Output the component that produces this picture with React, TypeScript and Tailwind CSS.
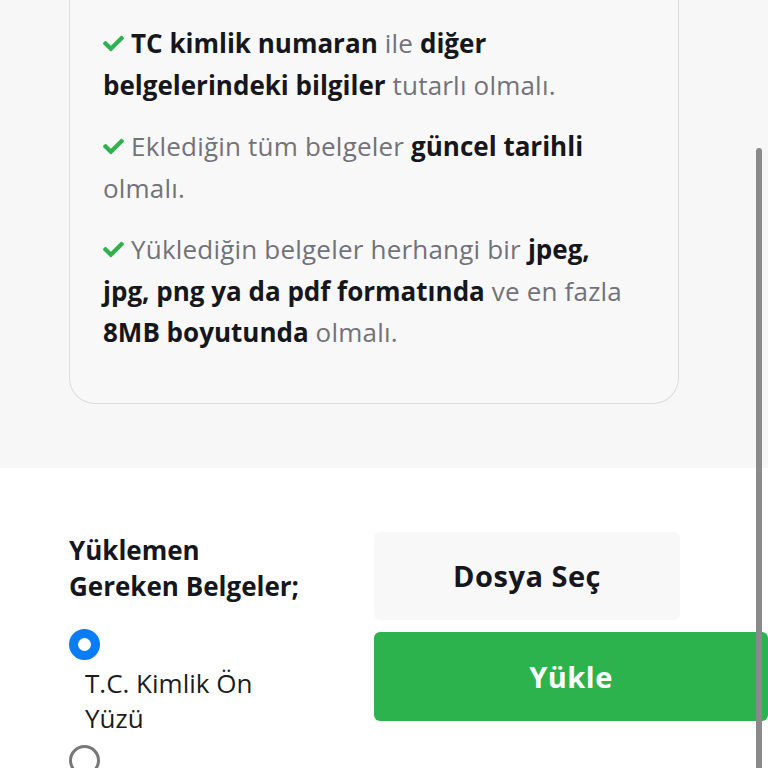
import React from 'react';
import { FaCheck } from 'react-icons/fa';

const font = { fontFamily: '"Open Sans", Lato, sans-serif' };

const Rule = ({ children }: { children: React.ReactNode }) => (
	<p className="text-[26px] leading-[41.5px] tracking-[0.2px] text-[#72727a]">
		<FaCheck className="inline-block w-[21px] h-[21px] mr-[7px] -mt-[5px] text-[#2fb14f]" />
		{children}
	</p>
);

const B = ({ children }: { children: React.ReactNode }) => (
	<strong className="font-bold tracking-normal text-[#16161d]">{children}</strong>
);

const App = () => {
	return (
		<div className="relative w-[768px] h-[768px] overflow-hidden bg-white" style={font}>
			<div className="bg-[#f7f7f7] px-[69px] pb-[64px] h-[468px]">
				<div className="w-[610px] h-[404px] bg-[#f8f8f8] border border-t-0 border-[#dcdcdc] rounded-b-[26px] px-[33px] pt-[23px] flex flex-col gap-[20px]">
					<Rule>
						<B>TC kimlik numaran</B> ile <B>diğer</B>
						<br />
						<B>belgelerindeki bilgiler</B> tutarlı olmalı.
					</Rule>
					<Rule>
						Eklediğin tüm belgeler <B>güncel tarihli</B>
						<br />
						olmalı.
					</Rule>
					<Rule>
						Yüklediğin belgeler herhangi bir <B>jpeg,</B>
						<br />
						<B>jpg, png ya da pdf formatında</B> ve en fazla
						<br />
						<B>8MB boyutunda</B> olmalı.
					</Rule>
				</div>
			</div>

			<div className="flex pl-[69px] pt-[64px] gap-[45px]">
				<div className="w-[260px] shrink-0">
					<h3 className="text-[26px] leading-[36px] font-bold text-[#16161d]">
						Yüklemen
						<br />
						Gereken Belgeler;
					</h3>
					<div className="mt-[25px]">
						<span className="block w-[31px] h-[31px] rounded-full border-[9px] border-[#0a7cf5] bg-white" />
						<p className="w-[200px] ml-[16px] mt-[6px] text-[26px] leading-[35px] text-[#1c1c1c]">
							T.C. Kimlik Ön Yüzü
						</p>
						<span className="block mt-[9px] w-[31px] h-[31px] rounded-full border-[3px] border-[#777]" />
					</div>
				</div>

				<div className="flex flex-col gap-[12px] shrink-0">
					<button className="w-[306px] h-[88px] bg-[#f8f8f9] rounded-[6px] text-[29px] tracking-[0.5px] font-bold text-[#16161d]">
						Dosya Seç
					</button>
					<button className="w-[394px] h-[89px] bg-[#2db34d] rounded-[6px] text-[29px] tracking-[0.5px] font-bold text-white">
						Yükle
					</button>
				</div>
			</div>

			<div className="absolute right-[6px] top-[148px] bottom-0 w-[6px] rounded-t-full bg-[#8a8a8a]" />
		</div>
	);
};

export default App;
